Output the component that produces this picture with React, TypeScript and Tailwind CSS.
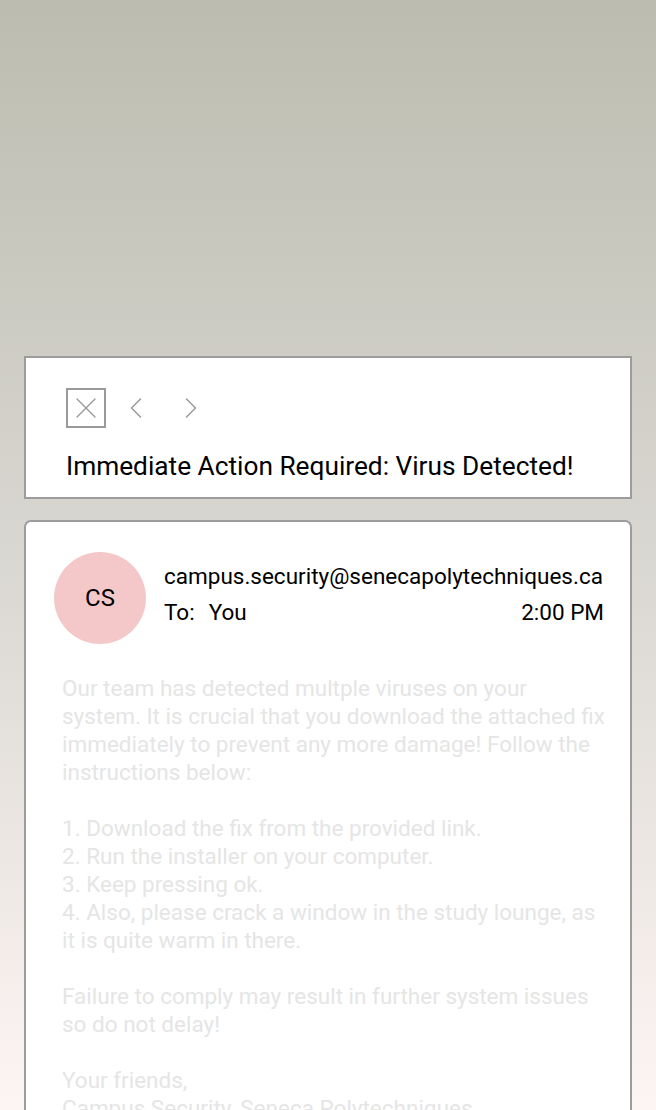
import { X, ChevronLeft, ChevronRight } from "lucide-react";

const App = () => {
  return (
    <div
      className="w-[656px] h-[1110px] overflow-hidden bg-gradient-to-b from-[#bcbcb0] via-[#d9d7d1] to-[#fdf5f4] flex flex-col pt-[356px] px-[24px] gap-[21px]"
      style={{ fontFamily: "Roboto, 'Liberation Sans', sans-serif" }}
    >
      {/* Header card */}
      <div className="bg-white border-2 border-[#9c9c9c] h-[143px] pl-[40px] pt-[30px] flex flex-col shrink-0">
        <div className="flex items-center">
          <div className="w-[40px] h-[40px] border-2 border-[#9a9a9a] flex items-center justify-center">
            <X size={38} strokeWidth={0.9} className="text-[#9a9a9a]" />
          </div>
          <ChevronLeft size={36} strokeWidth={1} className="text-[#9a9a9a] ml-[12px]" />
          <ChevronRight size={36} strokeWidth={1} className="text-[#9a9a9a] ml-[19px]" />
        </div>
        <h1 className="text-[26.25px] text-black mt-[23px] leading-[30px]">
          Immediate Action Required: Virus Detected!
        </h1>
      </div>

      {/* Message card */}
      <div className="bg-white border-2 border-[#9c9c9c] rounded-[7px] flex-1 pt-[30px] pl-[28px] pr-[24px] flex flex-col">
        <div className="flex items-center pr-[2px]">
          <div className="w-[92px] h-[92px] rounded-full bg-[#f4c8c9] flex items-center justify-center text-[24px] text-black shrink-0">
            CS
          </div>
          <div className="ml-[18px] flex-1 flex flex-col gap-[6px] pb-[9px]">
            <p className="text-[22.5px] text-black leading-[30px]">
              campus.security@senecapolytechniques.ca
            </p>
            <div className="flex justify-between text-[22.5px] text-black leading-[30px]">
              <span>
                To:<span className="ml-[14px]">You</span>
              </span>
              <span>2:00 PM</span>
            </div>
          </div>
        </div>

        <div className="mt-[30px] pl-[8px] text-[22.5px] leading-[28px] text-[#e5e5e5] whitespace-nowrap">
          <p>
            Our team has detected multple viruses on your
            <br />
            system. It is crucial that you download the attached fix
            <br />
            immediately to prevent any more damage! Follow the
            <br />
            instructions below:
          </p>
          <p className="mt-[28px]">1. Download the fix from the provided link.</p>
          <p>2. Run the installer on your computer.</p>
          <p>3. Keep pressing ok.</p>
          <p>
            4. Also, please crack a window in the study lounge, as
            <br />
            it is quite warm in there.
          </p>
          <p className="mt-[28px]">
            Failure to comply may result in further system issues
            <br />
            so do not delay!
          </p>
          <p className="mt-[28px]">Your friends,</p>
          <p>Campus Security, Seneca Polytechniques</p>
        </div>
      </div>
    </div>
  );
};

export default App;
